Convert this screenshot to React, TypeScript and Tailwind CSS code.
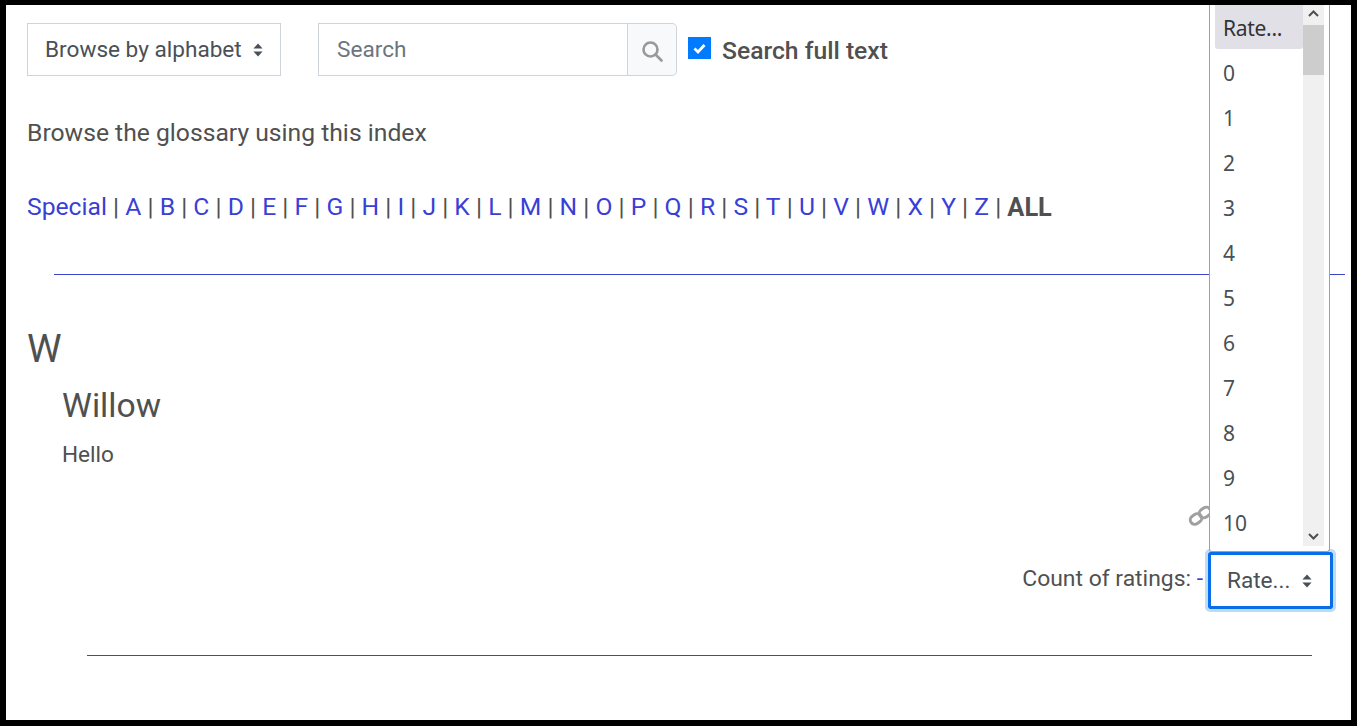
const letters = 'A B C D E F G H I J K L M N O P Q R S T U V W X Y Z'.split(' ')
const options = ['0', '1', '2', '3', '4', '5', '6', '7', '8', '9', '10']

function SortCaret() {
  return (
    <svg width="10" height="14" viewBox="0 0 10 14" className="shrink-0 fill-[#495057]">
      <path d="M5 0.5 L9.6 5.6 H0.4 Z" />
      <path d="M5 13.5 L9.6 8.4 H0.4 Z" />
    </svg>
  )
}

function RatingDropdown() {
  return (
    <div className="absolute left-[1203px] top-0 w-[121px] h-[547px] flex bg-white border border-t-0 border-[#a0a0a0] rounded-b-[3px] px-[5px] pb-[5px] overflow-hidden font-['Noto_Sans',sans-serif] text-[21px]">
      <ul className="flex-1 text-[#495057]">
        <li className="h-[44px] pl-2 pt-[4px] flex items-center bg-[#e0e0e6] rounded-b-[3px] text-[#333] tracking-[-0.3px]">Rate...</li>
        {options.map((o) => (
          <li key={o} className="h-[45px] pl-2 pt-[4px] flex items-center">{o}</li>
        ))}
      </ul>
      <div className="w-[21px] bg-[#f0f0f0] flex flex-col items-center relative">
        <svg width="11" height="7" viewBox="0 0 11 7" className="mt-[5px] fill-none stroke-[#505050] stroke-2">
          <path d="M1 6 L5.5 1.5 L10 6" />
        </svg>
        <div className="absolute top-[20px] left-0 w-full h-[50px] bg-[#cdcdcd]" />
        <svg width="11" height="7" viewBox="0 0 11 7" className="mt-auto mb-[6px] fill-none stroke-[#505050] stroke-2">
          <path d="M1 1 L5.5 5.5 L10 1" />
        </svg>
      </div>
    </div>
  )
}

export default function App() {
  return (
    <div className="w-[1357px] h-[726px] bg-black px-[6px] pt-[5px] pb-[6px] overflow-hidden font-['Roboto',sans-serif] text-[22.6px] text-[#505050]">
      <main className="relative h-full bg-white overflow-hidden">
        {/* Toolbar */}
        <div className="flex items-start pl-[21px] pt-[18px]">
          <div className="w-[254px] h-[53px] border border-[#ced4da] flex items-center justify-between px-[17px] text-[#495057]">
            <span className="mt-[1px]">Browse by alphabet</span>
            <SortCaret />
          </div>
          <div className="ml-[37px] flex h-[53px]">
            <div className="w-[310px] border border-[#ced4da] flex items-center pl-[18px] text-[#6c757d]">
              <span className="mt-[1px]">Search</span>
            </div>
            <div className="w-[49px] border border-l-0 border-[#ced4da] bg-[#f8f9fa] rounded-r-[5px] flex items-center justify-center">
              <svg width="22" height="22" viewBox="0 0 22 22" className="fill-none stroke-[#999] stroke-[2.6] mt-[2px]">
                <circle cx="9.5" cy="9.5" r="7" />
                <path d="M14.5 14.5 L20.5 20.5" strokeLinecap="round" />
              </svg>
            </div>
          </div>
          <div className="ml-[11px] mt-[14px] w-[23px] h-[22px] bg-[#007bff] flex items-center justify-center">
            <svg width="13" height="11" viewBox="0 0 13 11" className="fill-none stroke-white stroke-[2.8]">
              <path d="M1.5 5.5 L5 9 L11.5 2" />
            </svg>
          </div>
          <span className="ml-[11px] mt-[9px] font-medium text-[24.7px]">Search full text</span>
        </div>

        <p className="ml-[21px] mt-[41px] leading-[32px] text-[24.7px]">Browse the glossary using this index</p>

        {/* Alphabet index */}
        <div className="ml-[21px] mt-[42px] leading-[32px] flex whitespace-pre text-[24.7px]">
          <span className="text-[#3a3fd6]">Special</span>
          {letters.map((l) => (
            <span key={l}>
              {' | '}
              <span className="text-[#3a3fd6]">{l}</span>
            </span>
          ))}
          <span>{' | '}</span>
          <b className="font-bold text-[25.4px]">ALL</b>
        </div>

        <div className="ml-[48px] mt-[51px] w-[1291px] h-px bg-[#3a45cc]" />

        <h2 className="ml-[21px] mt-[50px] text-[39px] leading-[48px]">W</h2>
        <h3 className="ml-[56px] mt-[10px] text-[33.7px] leading-[46px]">Willow</h3>
        <p className="ml-[56px] mt-[10px] leading-[32px]">Hello</p>

        {/* Entry footer */}
        <div className="h-[61px] mt-[22px] flex justify-end pr-[137px]">
          <svg width="26" height="22" viewBox="0 0 26 22" className="mt-[12px] fill-none stroke-[#a0a0a0] stroke-[3]">
            <rect x="2" y="9.5" width="12" height="9" rx="4.5" transform="rotate(-35 8 14)" />
            <rect x="11" y="3" width="12" height="9" rx="4.5" transform="rotate(-35 17 7.5)" />
          </svg>
        </div>
        <div className="flex justify-end items-center pr-[18px] mt-[-2px]">
          <span className="mb-[2px] text-[22.9px]">Count of ratings: <span className="text-[#3a3fd6]">-</span></span>
          <div className="ml-[5px] w-[125px] h-[57px] border-[3px] border-[#0a6ee8] rounded-[2px] outline-[3px] outline-[#bcdcfb] flex items-center justify-between pl-[16px] pr-[18px] text-[#495057]">
            <span>Rate...</span>
            <SortCaret />
          </div>
        </div>

        <div className="ml-[81px] mt-[46px] w-[1225px] h-px bg-[#3a45cc]" />

        <RatingDropdown />
      </main>
    </div>
  )
}
